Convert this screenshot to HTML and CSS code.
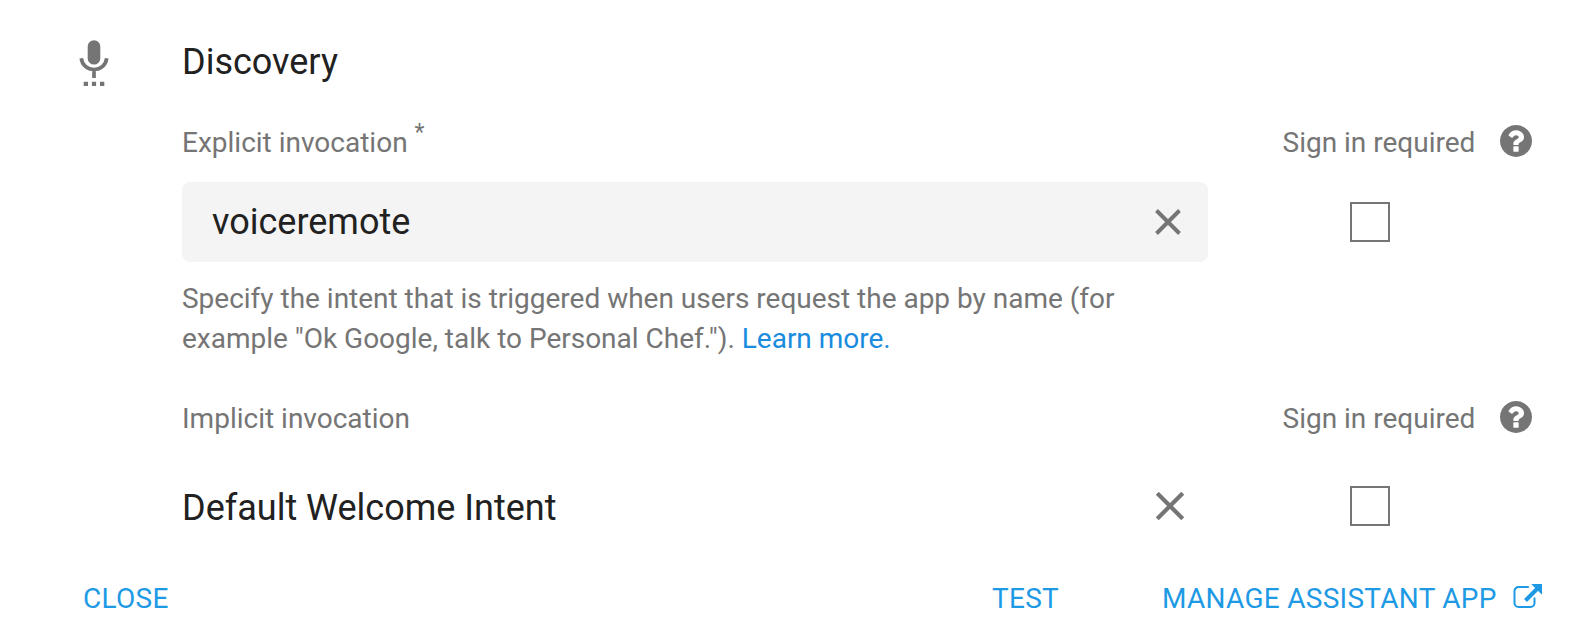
FILE: index.html
```html
<!DOCTYPE html>
<html lang="en"><head><meta charset="utf-8"><title>Discovery</title><link rel="stylesheet" href="styles.css"></head>
<body>
<svg class="defs" width="0" height="0"><symbol id="help" viewBox="0 0 1536 1536"><path d="M896 1248v-192q0-14-9-23t-23-9h-192q-14 0-23 9t-9 23v192q0 14 9 23t23 9h192q14 0 23-9t9-23zm256-672q0-88-55.500-163t-138.500-116-170-41q-243 0-371 213-15 24 8 42l132 100q7 6 19 6 16 0 25-12 53-68 86-92 34-24 86-24 48 0 85.500 26t37.500 59q0 38-20 61t-68 45q-63 28-115.500 86.500t-52.500 125.500v36q0 14 9 23t23 9h192q14 0 23-9t9-23q0-19 21.500-49.500t54.500-49.500q32-18 49-28.500t46-35 44.500-48 28-60.500 12.500-81zm384 192q0 209-103 385.500t-279.500 279.500-385.500 103-385.500-103-279.500-279.500-103-385.500 103-385.500 279.500-279.500 385.500-103 385.500 103 279.500 279.500 103 385.500z"/></symbol></svg>
<main class="panel">
<svg class="mic" viewBox="0 0 30 48"><rect x="8.700" y="0.200" width="12.600" height="24.400" rx="6.300"/><path d="M2.300 18.300C3 25 8.300 29.500 15 29.500S27 25 27.700 18.300M15 29.500V38" fill="none" stroke="currentColor" stroke-width="3.700"/><path d="M4.700 41.800H9V46H4.700zM12.900 41.800h4.200V46h-4.200zM21 41.800h4.300V46H21z"/></svg>
<section class="content">
<h1 class="title">Discovery</h1>
<div class="row labels"><span class="label">Explicit invocation<span class="star">*</span></span><span class="signin">Sign in required<svg class="help"><use href="#help"/></svg></span></div>
<div class="row fieldrow"><div class="field"><span>voiceremote</span><svg class="x" viewBox="0 0 26 26"><path d="M1.500 1.500l23 23M24.500 1.500L1.500 24.500"/></svg></div><span class="box"></span></div>
<p class="help-text">Specify the intent that is triggered when users request the app by name (for<br>example "Ok Google, talk to Personal Chef."). <a class="link">Learn more.</a></p>
<div class="row labels2"><span class="label">Implicit invocation</span><span class="signin">Sign in required<svg class="help"><use href="#help"/></svg></span></div>
<div class="row fieldrow intent"><div class="field plain"><span class="intent-name">Default Welcome Intent</span><svg class="x large" viewBox="0 0 26 26"><path d="M1.200 1.200l23.600 23.600M24.800 1.200L1.200 24.800"/></svg></div><span class="box"></span></div>
</section>
</main>
<footer class="actions"><span class="close">CLOSE</span><span class="test">TEST</span><span class="manage">MANAGE ASSISTANT APP</span><svg class="open" viewBox="0 0 29 25"><path d="M15.800 3H5.500a4 4 0 0 0-4 4v12a4 4 0 0 0 4 4h12a4 4 0 0 0 4-4v-5.500" fill="none" stroke="currentColor" stroke-width="2"/><path d="M12.500 16.500L24 5" fill="none" stroke="currentColor" stroke-width="4"/><path d="M18.200 0H29v10.800z"/></svg></footer>
</body></html>
```
FILE: styles.css
```css
*{box-sizing:border-box}
body{margin:0;width:1576px;height:638px;background:#fff;font-family:Roboto,sans-serif;font-size:28px;color:#757575;overflow:hidden}
svg{display:block;flex:none;fill:currentColor}
.panel{display:flex;padding-left:79px;height:560px}
.mic{width:30px;height:48px;margin-top:40px}
.content{margin-left:73px;width:1394px;padding-top:42px}
.title{margin:0;font-weight:400;font-size:36px;line-height:40px;color:#212121}
.row{display:flex;align-items:center;height:40px}
.labels{margin:40px 0 20px}
.label{width:1100.500px}
.star{font-size:23px;vertical-align:12px;line-height:0;margin-left:7px}
.signin{display:flex;align-items:center}
.help{width:32px;height:32px;margin:0 0 2.500px 24.500px}
.fieldrow{height:80px}
.field{display:flex;align-items:center;justify-content:space-between;width:1026px;height:80px;padding:0 27px 0 30px;border-radius:8px;background:#f4f4f4;color:#212121;font-size:36px}
.x{width:26px;height:26px;color:#757575;stroke:currentColor;stroke-width:3.900}
.large{width:28px;height:28px}
.box{width:40px;height:40px;border:2px solid #757575;margin-left:142px}
.help-text{margin:17px 0 0;line-height:40px;letter-spacing:-.01px}
.link{color:#1a8cde}
.labels2{margin-top:39px}
.intent{margin-top:28px}
.plain{background:none;padding:0 24px 0 0}
.intent-name{padding-top:4px}
.actions{display:flex;align-items:center;height:76px;padding-left:83px;color:#1e9ae5;letter-spacing:.28px}
.close{width:909px}
.test{width:170px}
.open{width:29px;height:25px;margin:0 0 3px 16.500px}
```
